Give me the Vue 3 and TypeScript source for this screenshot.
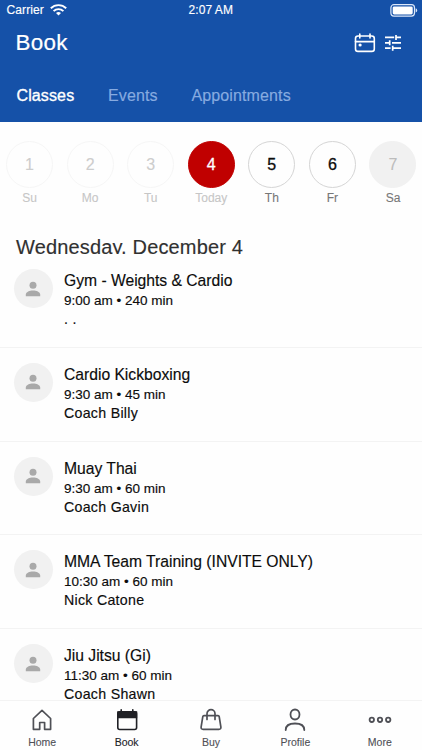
<script setup lang="ts">
interface Day { num: number; label: string; state: 'past' | 'today' | 'open' | 'empty' }
interface ClassItem { title: string; time: string; coach: string }

const days: Day[] = [
  { num: 1, label: 'Su', state: 'past' },
  { num: 2, label: 'Mo', state: 'past' },
  { num: 3, label: 'Tu', state: 'past' },
  { num: 4, label: 'Today', state: 'today' },
  { num: 5, label: 'Th', state: 'open' },
  { num: 6, label: 'Fr', state: 'open' },
  { num: 7, label: 'Sa', state: 'empty' },
]

const classes: ClassItem[] = [
  { title: 'Gym - Weights & Cardio', time: '9:00 am • 240 min', coach: '. .' },
  { title: 'Cardio Kickboxing', time: '9:30 am • 45 min', coach: 'Coach Billy' },
  { title: 'Muay Thai', time: '9:30 am • 60 min', coach: 'Coach Gavin' },
  { title: 'MMA Team Training (INVITE ONLY)', time: '10:30 am • 60 min', coach: 'Nick Catone' },
  { title: 'Jiu Jitsu (Gi)', time: '11:30 am • 60 min', coach: 'Coach Shawn' },
]
</script>

<template>
  <div class="screen">
    <header class="header">
      <div class="status">
        <div class="carrier">
          <span>Carrier</span>
          <svg width="17" height="12" viewBox="0 0 17 12" fill="none" stroke="#fff" stroke-width="1.9">
            <path d="M0.8 4.3a11 11 0 0 1 15.4 0" />
            <path d="M3.6 7.1a7 7 0 0 1 9.8 0" />
            <path d="M8.5 11.6 6 9.1a3.6 3.6 0 0 1 5 0z" fill="#fff" stroke="none" />
          </svg>
        </div>
        <span class="clock">2:07 AM</span>
        <svg class="battery" width="28" height="13" viewBox="0 0 28 13">
          <rect x="0.9" y="0.7" width="23.6" height="11.4" rx="3" fill="none" stroke="#dce8fa" stroke-width="1.2" />
          <rect x="2.7" y="2.4" width="20" height="8" rx="1.4" fill="#fff" />
          <path d="M25.7 4.3q1.5.6 1.5 2.1t-1.5 2.1z" fill="#dce8fa" />
        </svg>
      </div>
      <div class="titlebar">
        <h1>Book</h1>
        <div class="actions">
          <svg width="22" height="20" viewBox="0 0 22 20" fill="none" stroke="#fff" stroke-width="1.6" stroke-linecap="round">
            <rect x="1.5" y="3" width="18.8" height="15.4" rx="2.5" />
            <path d="M1.5 8.6h18.8M5.8 1v4M16 1v4" />
            <circle cx="6.1" cy="12" r="1.6" fill="#fff" stroke="none" />
          </svg>
          <svg width="18" height="18" viewBox="0 0 18 18" fill="none" stroke="#fff" stroke-width="1.7">
            <path d="M1 3.4h9.2M12.2 3.4H17M12 .9v5M1 8.8h4.5M8 8.8h9M5.7 6.3v5M1 14.2h5.6M9 14.2h8M8.7 11.7v5" />
          </svg>
        </div>
      </div>
      <nav class="tabs">
        <span class="active">Classes</span>
        <span>Events</span>
        <span>Appointments</span>
      </nav>
    </header>

    <section class="days">
      <div v-for="d in days" :key="d.num" class="day" :class="d.state">
        <div class="circle">{{ d.num }}</div>
        <div class="label">{{ d.label }}</div>
      </div>
    </section>

    <h2 class="date">Wednesday, December 4</h2>

    <main class="list">
      <article v-for="c in classes" :key="c.title" class="row">
        <div class="avatar">
          <svg width="16" height="16" viewBox="0 0 16 16" fill="#a9a9a9">
            <circle cx="8" cy="4.2" r="3.5" />
            <path d="M.8 15.2v-1.6c0-2.6 3.8-4.1 7.2-4.1s7.2 1.5 7.2 4.1v1.6z" />
          </svg>
        </div>
        <div class="info">
          <div class="title">{{ c.title }}</div>
          <div class="time">{{ c.time }}</div>
          <div class="coach">{{ c.coach }}</div>
        </div>
      </article>
    </main>

    <footer class="bottom">
      <div class="item">
        <svg width="24" height="24" viewBox="0 0 24 24" fill="none" stroke="#4f5056" stroke-width="1.7" stroke-linejoin="round">
          <path d="M3.4 10.5 12 2.4l8.6 8.1v10.8h-6v-6.8H9.7v6.8H3.4z" />
        </svg>
        <span>Home</span>
      </div>
      <div class="item selected">
        <svg width="24" height="24" viewBox="0 0 24 24" fill="none" stroke="#202126" stroke-width="1.6" stroke-linecap="round">
          <rect x="2.8" y="3.7" width="18.8" height="17.8" rx="2" />
          <path d="M3 4h18.4v5.5H3zM6.2 1.8v3M17.8 1.8v3" fill="#202126" />
        </svg>
        <span>Book</span>
      </div>
      <div class="item">
        <svg width="24" height="24" viewBox="0 0 24 24" fill="none" stroke="#4f5056" stroke-width="1.7" stroke-linecap="round" stroke-linejoin="round">
          <path d="M5 7.6h14q1 0 1.2 1l1.7 10.5q.2 2.2-2 2.2H4.1q-2.2 0-2-2.2L3.8 8.6q.2-1 1.2-1z" />
          <path d="M8 11.5V5.7a4 4 0 0 1 8 0v5.8" />
        </svg>
        <span>Buy</span>
      </div>
      <div class="item">
        <svg width="24" height="24" viewBox="0 0 24 24" fill="none" stroke="#4f5056" stroke-width="1.8" stroke-linecap="round">
          <ellipse cx="12" cy="6.5" rx="4.5" ry="5" />
          <path d="M2.7 22c0-4.5 3.6-6.5 9.3-6.5s9.3 2 9.3 6.5" />
        </svg>
        <span>Profile</span>
      </div>
      <div class="item">
        <svg width="24" height="24" viewBox="0 0 24 24" fill="none" stroke="#4f5056" stroke-width="1.8">
          <circle cx="3.8" cy="11.8" r="2.2" /><circle cx="12" cy="11.8" r="2.2" /><circle cx="20.2" cy="11.8" r="2.2" />
        </svg>
        <span>More</span>
      </div>
    </footer>
  </div>
</template>

<style>
body { margin: 0; background: #fff; }
</style>

<style scoped>
.screen {
  width: 422px;
  height: 750px;
  display: flex;
  flex-direction: column;
  overflow: hidden;
  background: #fefefe;
  color: #0c0c0c;
  font-family: "Liberation Sans", Arial, sans-serif;
}
h1, h2 { margin: 0; font-weight: 400; }
.header { height: 122px; flex: none; background: #1551a8; color: #fff; }
.status {
  height: 20px;
  display: grid;
  grid-template-columns: 1fr auto 1fr;
  align-items: center;
  padding: 0 4px 0 6.5px;
  font-size: 12px;
  line-height: 19px;
  -webkit-text-stroke: .15px currentColor;
}
.carrier { display: flex; align-items: center; gap: 6px; letter-spacing: .1px; }
.clock { letter-spacing: .05px; margin-right: 3px; }
.battery { justify-self: end; }
.titlebar {
  height: 45px;
  display: flex;
  align-items: center;
  justify-content: space-between;
  padding: 0 20px 0 15.5px;
}
h1 { font-size: 22.4px; letter-spacing: .3px; line-height: 45px; -webkit-text-stroke: .2px #fff; }
.actions { display: flex; align-items: center; gap: 8px; }
.tabs {
  display: flex;
  padding: 20px 0 0 16.5px;
  gap: 33.8px;
  font-size: 16px;
  line-height: 22px;
  letter-spacing: .12px;
  color: #87abe0;
  -webkit-text-stroke: .15px currentColor;
}
.active { color: #fff; -webkit-text-stroke: .35px #fff; }
.days {
  display: flex;
  justify-content: space-between;
  padding: 19px 5.5px 0 6px;
  height: 94px;
  flex: none;
  box-sizing: border-box;
}
.day { width: 47px; text-align: center; }
.circle {
  width: 47px;
  height: 47px;
  border-radius: 50%;
  border: 1px solid #d5d5d5;
  box-sizing: border-box;
  font-size: 16px;
  line-height: 45px;
  -webkit-text-stroke: .3px currentColor;
}
.label { margin-top: 2px; font-size: 12px; line-height: 17px; color: #777; -webkit-text-stroke: .1px currentColor; }
.past .circle { border-color: #f6f6f6; color: #cdcdcd; -webkit-text-stroke: .1px currentColor; }
.past .label, .today .label { color: #c6c6c6; }
.today .circle { background: #c00000; border-color: #c00000; color: #fff; }
.empty .circle { background: #f1f1f1; border-color: #f1f1f1; color: #bcbcbc; -webkit-text-stroke: .1px currentColor; }
.date {
  flex: none;
  margin-top: 19px;
  padding-left: 16px;
  height: 19px;
  overflow: hidden;
  font-size: 20px;
  line-height: 24px;
  letter-spacing: .15px;
  color: #303030;
  -webkit-text-stroke: .15px currentColor;
}
.list { flex: 1; min-height: 0; overflow: hidden; }
.row {
  height: 93.75px;
  box-sizing: border-box;
  border-bottom: 1px solid #f3f3f3;
  padding: 15px 13.5px 0;
  display: flex;
  gap: 11.5px;
}
.avatar {
  width: 39px;
  height: 39px;
  border-radius: 50%;
  background: #f1f1f1;
  display: flex;
  align-items: center;
  justify-content: center;
}
.info { padding-top: 1px; white-space: nowrap; -webkit-text-stroke: .15px currentColor; }
.title { font-size: 15.7px; line-height: 21px; letter-spacing: -.02px; }
.time { font-size: 13.5px; line-height: 19px; }
.coach { font-size: 14.2px; line-height: 19px; letter-spacing: .28px; }
.bottom {
  flex: none;
  height: 50.5px;
  box-sizing: border-box;
  border-top: 1px solid #f3f3f3;
  background: #fefefe;
  display: grid;
  grid-template-columns: repeat(5, 1fr);
}
.item {
  display: flex;
  flex-direction: column;
  align-items: center;
  padding-top: 7px;
  gap: 4.5px;
  color: #4f5056;
  font-size: 10.5px;
  line-height: 12px;
  -webkit-text-stroke: .1px currentColor;
}
.selected { color: #202126; }
</style>
